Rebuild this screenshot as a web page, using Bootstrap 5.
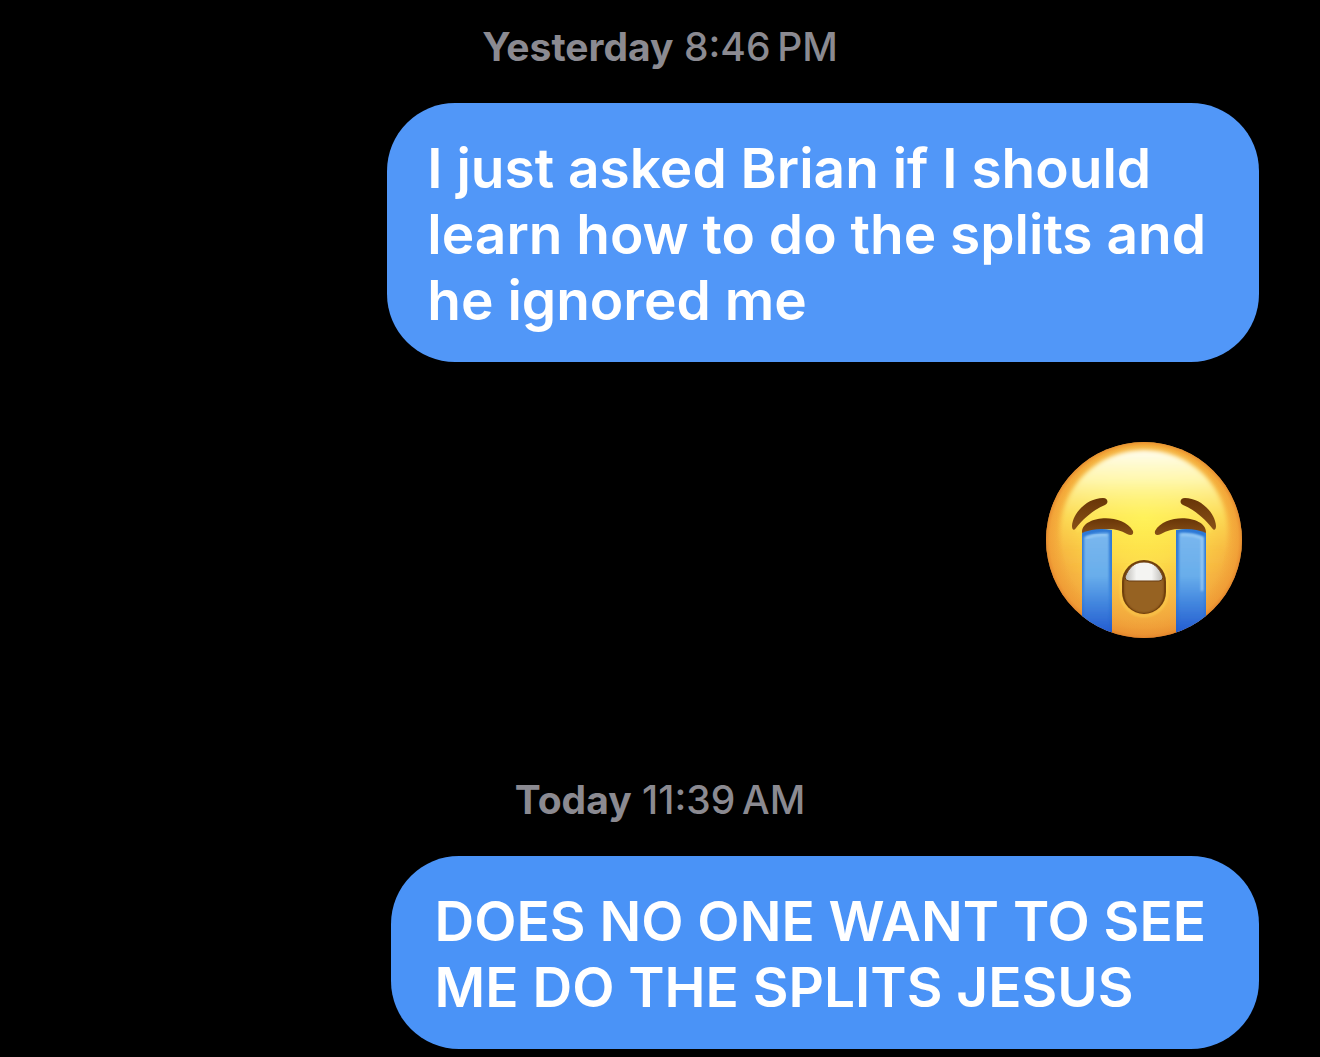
<!DOCTYPE html>
<html lang="en">
<head>
<meta charset="utf-8">
<meta name="viewport" content="width=device-width, initial-scale=1">
<title>Messages</title>
<link href="https://cdn.jsdelivr.net/npm/bootstrap@5.3.0/dist/css/bootstrap.min.css" rel="stylesheet">
<style>
body { background: #000; font-family: Inter, "Liberation Sans", sans-serif; }
.thread { padding: 17px 61px 7px; }
.stamp { color: #8b8a91; font-size: 39px; line-height: 60px; font-weight: 500; }
.stamp strong { font-weight: 700; }
.bubble { color: #fff; background: #5197f8; font-size: 55px; line-height: 66px; font-weight: 600; border-radius: 68px; padding: 32px 53px 29px 40px; margin-top: 26px; }
.bubble-late { background: #4a93f7; padding-left: 44px; }
.emoji { width: 198px; height: 198px; margin: 79px 16px 131px; }
</style>
</head>
<body>
<main class="thread d-flex flex-column">
  <time class="stamp text-center"><strong>Yesterday</strong> 8:46&#8201;PM</time>
  <div class="bubble align-self-end">I just asked Brian if I should<br>learn how to do the splits and<br>he ignored me</div>
  <svg class="emoji align-self-end" viewBox="0 0 198 198" role="img" aria-label="Loudly crying face">
    <defs>
      <radialGradient id="face" cx="99" cy="76" r="126" gradientUnits="userSpaceOnUse">
        <stop offset="0" stop-color="#fff04e"/><stop offset=".36" stop-color="#fddc4b"/><stop offset=".68" stop-color="#f7b842"/><stop offset=".88" stop-color="#f0a13b"/><stop offset="1" stop-color="#dd7d2c"/>
      </radialGradient>
      <radialGradient id="rim" cx="99" cy="99" r="99" gradientUnits="userSpaceOnUse">
        <stop offset=".82" stop-color="#f09a30" stop-opacity="0"/><stop offset=".95" stop-color="#ef9731" stop-opacity=".5"/><stop offset="1" stop-color="#df7e29" stop-opacity=".9"/>
      </radialGradient>
      <linearGradient id="shine" x1="0" y1="0" x2="0" y2="1">
        <stop offset="0" stop-color="#fffdf0"/><stop offset=".18" stop-color="#fffbb9" stop-opacity=".9"/><stop offset=".4" stop-color="#fff36a" stop-opacity=".5"/><stop offset=".6" stop-color="#ffe94c" stop-opacity=".08"/><stop offset=".75" stop-color="#ffe94c" stop-opacity="0"/>
      </linearGradient>
      <linearGradient id="tear" x1="0" y1="0" x2="0" y2="1">
        <stop offset="0" stop-color="#7ab7ee"/><stop offset=".4" stop-color="#69aeeb"/><stop offset=".65" stop-color="#4488df"/><stop offset=".92" stop-color="#265fd1"/>
      </linearGradient>
      <linearGradient id="tearEdge" x1="0" y1="0" x2="0" y2="1">
        <stop offset="0" stop-color="#2c78d5"/><stop offset=".6" stop-color="#3b85dd"/><stop offset="1" stop-color="#1f55c8"/>
      </linearGradient>
      <linearGradient id="brown" x1="0" y1="0" x2="0" y2="1"><stop offset="0" stop-color="#683507"/><stop offset="1" stop-color="#885017"/></linearGradient>
      <linearGradient id="teeth" x1="0" y1="0" x2="1" y2="0"><stop offset="0" stop-color="#bdbbb7"/><stop offset=".3" stop-color="#f4f4f2"/><stop offset=".7" stop-color="#f4f4f2"/><stop offset="1" stop-color="#bdbbb7"/></linearGradient>
      <clipPath id="disc"><circle cx="99" cy="99" r="98"/></clipPath>
      <clipPath id="mouth"><rect x="79" y="121" width="40" height="51" rx="20"/></clipPath>
      <filter id="soft" x="-10%" y="-10%" width="120%" height="120%"><feGaussianBlur stdDeviation="1"/></filter>
      <filter id="softer" x="-10%" y="-10%" width="120%" height="120%"><feGaussianBlur stdDeviation="2"/></filter>
    </defs>
    <circle cx="99" cy="99" r="98" fill="url(#face)"/>
    <circle cx="99" cy="99" r="98" fill="url(#rim)"/>
    <ellipse cx="99" cy="92" rx="84" ry="83" fill="url(#shine)" filter="url(#softer)"/>
    <g fill="none" stroke="#ffe75a" stroke-opacity=".45" stroke-width="2" filter="url(#soft)">
      <path d="M32 91Q42 75 63 64M166 91Q156 75 135 64M38 93Q66 82 88 94M160 93Q132 82 110 94"/>
      <rect x="76" y="119" width="46" height="56" rx="23"/>
    </g>
    <g>
      <path d="M27 85C28 71 43 57 58 57C63 57 64 62 60 64C48 69 38 78 31 87C29 90 27 89 27 85Z" fill="url(#brown)"/>
      <path d="M37 91C37 75 77 71 88 90C89 94 86 95 82 93C70 86 56 87 42 93C39 94 37 93 37 91Z" fill="url(#brown)"/>
    </g>
    <g transform="matrix(-1 0 0 1 198 0)">
      <path d="M27 85C28 71 43 57 58 57C63 57 64 62 60 64C48 69 38 78 31 87C29 90 27 89 27 85Z" fill="url(#brown)"/>
      <path d="M37 91C37 75 77 71 88 90C89 94 86 95 82 93C70 86 56 87 42 93C39 94 37 93 37 91Z" fill="url(#brown)"/>
    </g>
    <g clip-path="url(#disc)">
      <path d="M37 92Q51 86 67 89V198H37Z" fill="url(#tearEdge)"/>
      <path d="M39 96Q52 91 64 92V198H39Z" fill="url(#tear)" filter="url(#soft)"/>
      <path d="M41 97Q52 93 62 94" fill="none" stroke="#9bcdf6" stroke-width="2" filter="url(#soft)"/>
      <path d="M161 92Q147 86 131 89V198H161Z" fill="url(#tearEdge)"/>
      <path d="M159 96Q146 91 134 92V198H159Z" fill="url(#tear)" filter="url(#soft)"/>
      <path d="M157 150V97Q146 93 136 94" fill="none" stroke="#9bcdf6" stroke-width="2" filter="url(#soft)"/>
    </g>
    <rect x="77" y="119" width="44" height="54" rx="22" fill="#71400c"/>
    <g clip-path="url(#mouth)">
      <rect x="79" y="121" width="40" height="51" rx="20" fill="#966221" filter="url(#soft)"/>
      <path d="M80 136C84 126 90 121 99 121C108 121 114 126 118 136Q118 140 114 140H84Q80 140 80 136Z" fill="url(#teeth)" stroke="#683c12" stroke-width="1"/>
    </g>
  </svg>
  <time class="stamp text-center"><strong>Today</strong> 11:39&#8201;AM</time>
  <div class="bubble bubble-late align-self-end">DOES NO ONE WANT TO SEE<br>ME DO THE SPLITS JESUS</div>
</main>
<script src="https://cdn.jsdelivr.net/npm/bootstrap@5.3.0/dist/js/bootstrap.bundle.min.js"></script>
</body>
</html>
